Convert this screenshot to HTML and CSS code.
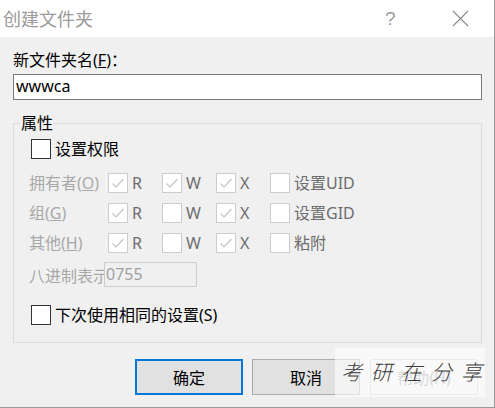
FILE: index.html
```html
<!DOCTYPE html>
<html lang="zh-CN">
<head>
    <meta charset="UTF-8">
    <title>创建文件夹</title>
    <link rel="stylesheet" href="styles.css">
</head>
<body>

<div class="window">
    <div class="titlebar">
        <span class="title">创建文件夹</span>
        <span class="help">?</span>
        <svg class="close" width="17" height="17" viewBox="0 0 17 17">
            <path d="M1 1 L16 16 M16 1 L1 16" stroke="#8a8a8a" stroke-width="1.1" fill="none"/>
        </svg>
    </div>

    <div class="content">
        <div class="name-label">新文件夹名(<u>F</u>)：</div>
        <div class="name-input">wwwca</div>

        <fieldset class="group">
            <legend>属性</legend>

            <div class="check-row top">
                <span class="box"></span>
                <span class="check-text">设置权限</span>
            </div>

            <div class="perm-row first">
                <span class="perm-label">拥有者(<u>O</u>)</span>
                <span class="perm"><span class="box off on"></span><span>R</span></span>
                <span class="perm"><span class="box off on"></span><span>W</span></span>
                <span class="perm"><span class="box off on"></span><span>X</span></span>
                <span class="perm wide"><span class="box off"></span><span>设置UID</span></span>
            </div>
            <div class="perm-row">
                <span class="perm-label">组(<u>G</u>)</span>
                <span class="perm"><span class="box off on"></span><span>R</span></span>
                <span class="perm"><span class="box off"></span><span>W</span></span>
                <span class="perm"><span class="box off on"></span><span>X</span></span>
                <span class="perm wide"><span class="box off"></span><span>设置GID</span></span>
            </div>
            <div class="perm-row">
                <span class="perm-label">其他(<u>H</u>)</span>
                <span class="perm"><span class="box off on"></span><span>R</span></span>
                <span class="perm"><span class="box off"></span><span>W</span></span>
                <span class="perm"><span class="box off on"></span><span>X</span></span>
                <span class="perm wide"><span class="box off"></span><span>粘附</span></span>
            </div>

            <div class="octal-row">
                <span class="octal-label">八进制表示</span>
                <span class="octal-input">0755</span>
            </div>

            <div class="check-row bottom">
                <span class="box"></span>
                <span class="check-text">下次使用相同的设置(S)</span>
            </div>
        </fieldset>

        <div class="buttons">
            <button class="btn default">确定</button>
            <button class="btn">取消</button>
            <button class="btn disabled">帮助(H)</button>
        </div>
    </div>

    <div class="watermark">考研在分享</div>
</div>

</body>
</html>
```

FILE: styles.css
```css
body {
    margin: 0;
    padding: 0;
    background-color: #f0f0f0;
    font-family: 'Noto Sans', 'Noto Sans CJK SC', sans-serif;
    color: #000;
    overflow: hidden;
}
.window {
    position: relative;
    box-sizing: border-box;
    width: 495px;
    height: 408px;
    border-right: 1px solid #9a9a9a;
    border-bottom: 1px solid #9a9a9a;
    background-color: #f0f0f0;
}
.titlebar {
    display: flex;
    align-items: center;
    height: 37px;
    background-color: #ffffff;
}
.title {
    padding-left: 3px;
    font-size: 18px;
    line-height: 20px;
    color: #9a9a9a;
}
.help {
    margin-left: auto;
    width: 10px;
    font-size: 19px;
    line-height: 20px;
    color: #9a9a9a;
    font-family: 'Liberation Sans', sans-serif;
}
.close {
    margin-left: 57px;
    margin-right: 25px;
}
.content {
    padding: 0 0 0 13px;
}
.name-label {
    margin-top: 13px;
    height: 20px;
    font-size: 16px;
    line-height: 20px;
}
.name-input {
    box-sizing: border-box;
    margin-top: 4px;
    width: 469px;
    height: 26px;
    border: 1px solid #7a7a7a;
    background-color: #ffffff;
    padding-left: 2px;
    font-size: 16px;
    line-height: 23px;
}
.group {
    box-sizing: border-box;
    margin: 14px 0 0 0;
    width: 469px;
    padding: 0 0 17px 0;
    border: 1px solid #dcdcdc;
    min-inline-size: 0;
}
.group legend {
    margin-left: 6px;
    padding: 0 1px;
    font-size: 16px;
    line-height: 18px;
}
.box {
    display: inline-block;
    box-sizing: border-box;
    width: 20px;
    height: 20px;
    border: 1px solid #333333;
    background-color: #ffffff;
    flex-shrink: 0;
}
.box.off {
    border-color: #cccccc;
}
.box.on {
    background-image: url("data:image/svg+xml,%3Csvg xmlns='http://www.w3.org/2000/svg' width='18' height='18'%3E%3Cpath d='M3.5 9.5 L7 13 L14.5 5' stroke='%23c4c4c4' stroke-width='1.2' fill='none'/%3E%3C/svg%3E");
    background-repeat: no-repeat;
}
.check-row {
    display: flex;
    align-items: center;
    height: 20px;
    padding-left: 17px;
    font-size: 16px;
}
.check-row.top {
    margin-top: 7px;
}
.check-row.bottom {
    margin-top: 18px;
}
.check-text {
    margin-left: 4px;
    line-height: 20px;
}
.perm-row {
    display: flex;
    align-items: center;
    height: 20px;
    margin-top: 10px;
    padding-left: 15px;
    font-size: 16px;
}
.perm-row.first {
    margin-top: 14px;
}
.perm-label {
    width: 79px;
    color: #a8a8a8;
    line-height: 20px;
    white-space: nowrap;
}
.perm {
    display: flex;
    align-items: center;
    width: 54px;
    color: #6d6d6d;
    line-height: 20px;
    white-space: nowrap;
}
.perm.wide {
    width: auto;
}
.perm span:last-child {
    margin-left: 4px;
}
.octal-row {
    display: flex;
    align-items: center;
    margin-top: 9px;
    padding-left: 15px;
    height: 25px;
    font-size: 16px;
    overflow: hidden;
}
.octal-label {
    width: 75px;
    white-space: nowrap;
    overflow: hidden;
    color: #a8a8a8;
}
.octal-input {
    box-sizing: border-box;
    width: 93px;
    height: 25px;
    border: 1px solid #cccccc;
    padding-left: 1px;
    font-size: 16px;
    line-height: 22px;
    color: #a0a0a0;
}
.buttons {
    display: flex;
    margin-top: 16px;
    padding-left: 122px;
}
.btn {
    box-sizing: border-box;
    width: 108px;
    height: 36px;
    margin-right: 9px;
    background-color: #e1e1e1;
    border: 1px solid #adadad;
    font-family: 'Noto Sans', 'Noto Sans CJK SC', sans-serif;
    font-size: 16px;
    color: #000;
    padding: 0;
}
.btn.default {
    border: 2px solid #0078d7;
}
.btn.disabled {
    margin-left: 1px;
    background-color: #f0f0f0;
    border-color: #cccccc;
    color: #a0a0a0;
}
.watermark {
    position: absolute;
    left: 335px;
    top: 348px;
    width: 150px;
    height: 49px;
    background-color: rgba(255, 255, 255, 0.6);
    font-size: 21px;
    line-height: 49px;
    letter-spacing: 9px;
    padding-left: 6px;
    box-sizing: border-box;
    color: #3a3a3a;
    font-style: italic;
    font-weight: 300;
    white-space: nowrap;
}
```
